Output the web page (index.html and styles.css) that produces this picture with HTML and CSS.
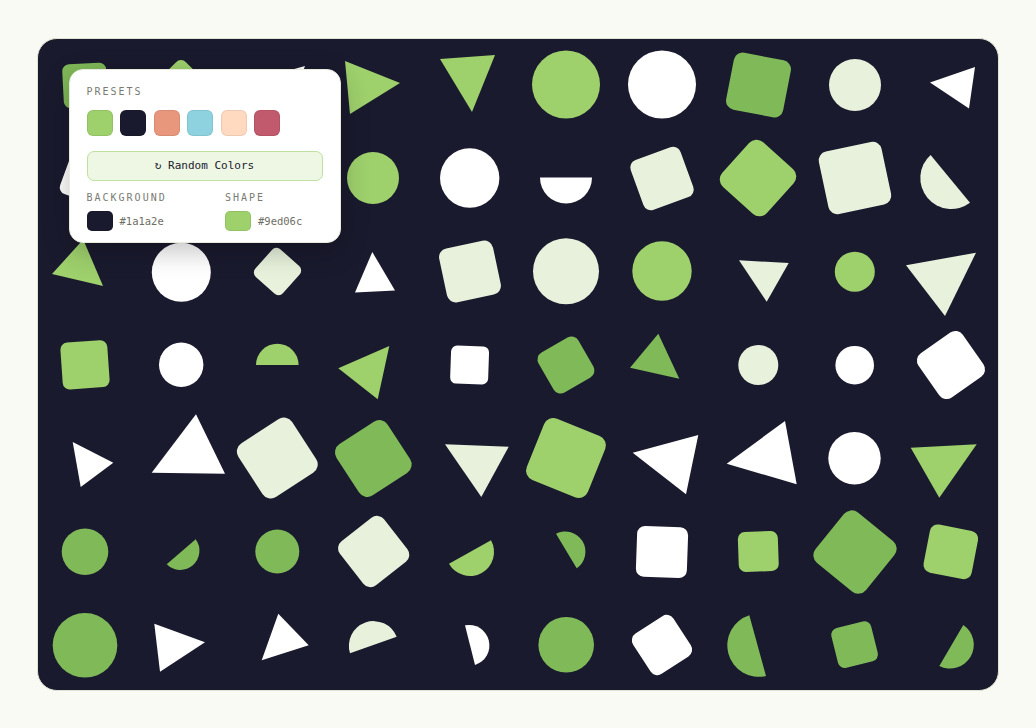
FILE: index.html
```html
<!DOCTYPE html>
<html lang="en">
<head>
<meta charset="utf-8">
<title>Shape Palette</title>
<link rel="stylesheet" href="styles.css">
</head>
<body>
<main class="stage">
  <section class="canvas">
    <div class="grid">
      <!-- row 1 -->
      <div class="cell"><svg viewBox="-48 -46.5 96 93"><rect class="d" x="-22" y="-22" width="44" height="44" rx="7" transform="translate(-1 0) rotate(-3)"/></svg></div>
      <div class="cell"><svg viewBox="-48 -46.5 96 93"><rect class="g" x="-20" y="-20" width="40" height="40" rx="7" transform="translate(-1 0) rotate(45)"/></svg></div>
      <div class="cell"><svg viewBox="-48 -46.5 96 93"><polygon class="w" points="27,-19.5 -25,-5 10,27"/></svg></div>
      <div class="cell"><svg viewBox="-48 -46.5 96 93"><polygon class="g" points="-29,-24.5 26,-2.5 -24,28.5"/></svg></div>
      <div class="cell"><svg viewBox="-48 -46.5 96 93"><polygon class="g" points="-30,-26.5 25,-30.5 2,26.5"/></svg></div>
      <div class="cell"><svg viewBox="-48 -46.5 96 93"><circle class="g" cx="0" cy="-1" r="34"/></svg></div>
      <div class="cell"><svg viewBox="-48 -46.5 96 93"><circle class="w" cx="0" cy="-1" r="34"/></svg></div>
      <div class="cell"><svg viewBox="-48 -46.5 96 93"><rect class="d" x="-29" y="-29" width="58" height="58" rx="9" transform="translate(0.5 -0.5) rotate(11)"/></svg></div>
      <div class="cell"><svg viewBox="-48 -46.5 96 93"><circle class="p" cx="1" cy="-0.5" r="26"/></svg></div>
      <div class="cell"><svg viewBox="-48 -46.5 96 93"><polygon class="w" points="-20,-3 25,-18.5 19,23"/></svg></div>
      <!-- row 2 -->
      <div class="cell"><svg viewBox="-48 -46.5 96 93"><rect class="w" x="-22" y="-22" width="44" height="44" rx="7" transform="rotate(20)"/></svg></div>
      <div class="cell"><svg viewBox="-48 -46.5 96 93"><circle class="g" cx="0" cy="0" r="24"/></svg></div>
      <div class="cell"><svg viewBox="-48 -46.5 96 93"><polygon class="p" points="-22,18 0,-24 22,18"/></svg></div>
      <div class="cell"><svg viewBox="-48 -46.5 96 93"><circle class="g" cx="-1" cy="-0.5" r="26"/></svg></div>
      <div class="cell"><svg viewBox="-48 -46.5 96 93"><circle class="w" cx="-0.3" cy="-0.5" r="29.7"/></svg></div>
      <div class="cell"><svg viewBox="-48 -46.5 96 93"><path class="w" d="M-26,-1 A26,26 0 0 0 26,-1 Z"/></svg></div>
      <div class="cell"><svg viewBox="-48 -46.5 96 93"><rect class="p" x="-26.5" y="-26.5" width="53" height="53" rx="8" transform="rotate(-20)"/></svg></div>
      <div class="cell"><svg viewBox="-48 -46.5 96 93"><rect class="g" x="-30" y="-30" width="60" height="60" rx="10" transform="translate(0 -0.5) rotate(42)"/></svg></div>
      <div class="cell"><svg viewBox="-48 -46.5 96 93"><rect class="p" x="-32" y="-32" width="64" height="64" rx="9" transform="translate(1 -0.5) rotate(-12)"/></svg></div>
      <div class="cell"><svg viewBox="-48 -46.5 96 93"><path class="p" d="M-19.4,-23.6 A31,31 0 0 0 20,24.2 Z"/></svg></div>
      <!-- row 3 -->
      <div class="cell"><svg viewBox="-48 -46.5 96 93"><polygon class="g" points="-34,2.5 -2.8,-32 17,14.5"/></svg></div>
      <div class="cell"><svg viewBox="-48 -46.5 96 93"><circle class="w" cx="-0.7" cy="0.8" r="29.5"/></svg></div>
      <div class="cell"><svg viewBox="-48 -46.5 96 93"><rect class="p" x="-18.5" y="-18.5" width="37" height="37" rx="6" transform="translate(-0.5 0) rotate(42)"/></svg></div>
      <div class="cell"><svg viewBox="-48 -46.5 96 93"><polygon class="w" points="-19,21 -1.7,-19.5 21,19"/></svg></div>
      <div class="cell"><svg viewBox="-48 -46.5 96 93"><rect class="p" x="-27.5" y="-27.5" width="55" height="55" rx="9" transform="rotate(-12)"/></svg></div>
      <div class="cell"><svg viewBox="-48 -46.5 96 93"><circle class="p" cx="0" cy="-0.2" r="33"/></svg></div>
      <div class="cell"><svg viewBox="-48 -46.5 96 93"><circle class="g" cx="0" cy="-0.5" r="29.7"/></svg></div>
      <div class="cell"><svg viewBox="-48 -46.5 96 93"><polygon class="p" points="-19,-11.2 30.7,-8.5 8.7,30.2"/></svg></div>
      <div class="cell"><svg viewBox="-48 -46.5 96 93"><circle class="g" cx="0.8" cy="0.2" r="20"/></svg></div>
      <div class="cell"><svg viewBox="-48 -46.5 96 93"><polygon class="p" points="-44,-6.2 26,-18.8 -5,44.5"/></svg></div>
      <!-- row 4 -->
      <div class="cell"><svg viewBox="-48 -46.5 96 93"><rect class="g" x="-23.5" y="-23.5" width="47" height="47" rx="7" transform="translate(-1 0.3) rotate(-4)"/></svg></div>
      <div class="cell"><svg viewBox="-48 -46.5 96 93"><circle class="w" cx="-0.8" cy="0.3" r="22.2"/></svg></div>
      <div class="cell"><svg viewBox="-48 -46.5 96 93"><path class="g" d="M-22,0.5 A21.3,21.3 0 0 1 20.6,0.5 Z"/></svg></div>
      <div class="cell"><svg viewBox="-48 -46.5 96 93"><polygon class="g" points="-35.7,3.8 15.3,-18.5 3.7,34.8"/></svg></div>
      <div class="cell"><svg viewBox="-48 -46.5 96 93"><rect class="w" x="-19" y="-19" width="38" height="38" rx="6" transform="translate(-0.4 0.5) rotate(2)"/></svg></div>
      <div class="cell"><svg viewBox="-48 -46.5 96 93"><rect class="d" x="-23" y="-23" width="46" height="46" rx="8" transform="translate(0 0.5) rotate(-30)"/></svg></div>
      <div class="cell"><svg viewBox="-48 -46.5 96 93"><polygon class="d" points="-32,3.2 -3.7,-30.8 17.3,14.2"/></svg></div>
      <div class="cell"><svg viewBox="-48 -46.5 96 93"><circle class="p" cx="0.3" cy="0.5" r="20"/></svg></div>
      <div class="cell"><svg viewBox="-48 -46.5 96 93"><circle class="w" cx="0.7" cy="0.7" r="19.3"/></svg></div>
      <div class="cell"><svg viewBox="-48 -46.5 96 93"><rect class="w" x="-27" y="-27" width="54" height="54" rx="9" transform="translate(1 0.5) rotate(-35)"/></svg></div>
      <!-- row 5 -->
      <div class="cell"><svg viewBox="-48 -46.5 96 93"><polygon class="w" points="-13.3,-15.5 27.3,5.2 -5.3,29.5"/></svg></div>
      <div class="cell"><svg viewBox="-48 -46.5 96 93"><polygon class="w" points="-30.3,15.2 14,-43.2 43,16.2"/></svg></div>
      <div class="cell"><svg viewBox="-48 -46.5 96 93"><rect class="p" x="-32" y="-32" width="64" height="64" rx="10" transform="translate(-0.7 0.5) rotate(-33)"/></svg></div>
      <div class="cell"><svg viewBox="-48 -46.5 96 93"><rect class="d" x="-30.5" y="-30.5" width="61" height="61" rx="10" transform="translate(-0.7 1) rotate(-33)"/></svg></div>
      <div class="cell"><svg viewBox="-48 -46.5 96 93"><polygon class="p" points="-25,-13.2 38.7,-10.8 11.3,39.5"/></svg></div>
      <div class="cell"><svg viewBox="-48 -46.5 96 93"><rect class="g" x="-33" y="-33" width="66" height="66" rx="10" transform="translate(0 0.5) rotate(22)"/></svg></div>
      <div class="cell"><svg viewBox="-48 -46.5 96 93"><polygon class="w" points="-29.3,-4.8 36.3,-22.5 24,36.8"/></svg></div>
      <div class="cell"><svg viewBox="-48 -46.5 96 93"><polygon class="w" points="-31.3,6.2 27,-36.5 38.7,26.8"/></svg></div>
      <div class="cell"><svg viewBox="-48 -46.5 96 93"><circle class="w" cx="0.5" cy="0.7" r="26.2"/></svg></div>
      <div class="cell"><svg viewBox="-48 -46.5 96 93"><polygon class="g" points="-39.3,-9.8 26.7,-13.2 -10.7,40.2"/></svg></div>
      <!-- row 6 -->
      <div class="cell"><svg viewBox="-48 -46.5 96 93"><circle class="d" cx="-1" cy="1.2" r="23.3"/></svg></div>
      <div class="cell"><svg viewBox="-48 -46.5 96 93"><path class="d" d="M-15.3,13.8 A19.2,19.2 0 0 0 13.7,-11.2 Z"/></svg></div>
      <div class="cell"><svg viewBox="-48 -46.5 96 93"><circle class="d" cx="-0.7" cy="1" r="22"/></svg></div>
      <div class="cell"><svg viewBox="-48 -46.5 96 93"><rect class="p" x="-28" y="-28" width="56" height="56" rx="9" transform="translate(-0.3 1) rotate(-38)"/></svg></div>
      <div class="cell"><svg viewBox="-48 -46.5 96 93"><path class="g" d="M-21,13.2 A24,24 0 0 0 21,-10.2 Z"/></svg></div>
      <div class="cell"><svg viewBox="-48 -46.5 96 93"><path class="d" d="M-10,-16.8 A20.2,20.2 0 0 1 10.7,17.8 Z"/></svg></div>
      <div class="cell"><svg viewBox="-48 -46.5 96 93"><rect class="w" x="-25.5" y="-25.5" width="51" height="51" rx="8" transform="translate(0 1.5) rotate(2)"/></svg></div>
      <div class="cell"><svg viewBox="-48 -46.5 96 93"><rect class="g" x="-20" y="-20" width="40" height="40" rx="7" transform="translate(0.3 1) rotate(-2)"/></svg></div>
      <div class="cell"><svg viewBox="-48 -46.5 96 93"><rect class="d" x="-32.5" y="-32.5" width="65" height="65" rx="10" transform="translate(1 1.5) rotate(39)"/></svg></div>
      <div class="cell"><svg viewBox="-48 -46.5 96 93"><rect class="g" x="-24.5" y="-24.5" width="49" height="49" rx="8" transform="translate(0.8 1.3) rotate(11)"/></svg></div>
      <!-- row 7 -->
      <div class="cell"><svg viewBox="-48 -46.5 96 93"><circle class="d" cx="-1" cy="1.8" r="32.3"/></svg></div>
      <div class="cell"><svg viewBox="-48 -46.5 96 93"><polygon class="w" points="-27.7,-19.8 23,-1.2 -22,28.2"/></svg></div>
      <div class="cell"><svg viewBox="-48 -46.5 96 93"><polygon class="w" points="-16.3,16.8 0.3,-29.8 30.7,1.8"/></svg></div>
      <div class="cell"><svg viewBox="-48 -46.5 96 93"><path class="p" d="M-24,9.8 A24.8,24.8 0 0 1 22.7,-6.8 Z"/></svg></div>
      <div class="cell"><svg viewBox="-48 -46.5 96 93"><path class="w" d="M-5,-18.2 A20.5,20.5 0 0 1 5,21.5 Z"/></svg></div>
      <div class="cell"><svg viewBox="-48 -46.5 96 93"><circle class="d" cx="0.2" cy="1.3" r="27.8"/></svg></div>
      <div class="cell"><svg viewBox="-48 -46.5 96 93"><rect class="w" x="-24" y="-24" width="48" height="48" rx="8" transform="translate(0 1.5) rotate(-33)"/></svg></div>
      <div class="cell"><svg viewBox="-48 -46.5 96 93"><path class="d" d="M-8.7,-28.2 A31.5,31.5 0 0 0 8,32.5 Z"/></svg></div>
      <div class="cell"><svg viewBox="-48 -46.5 96 93"><rect class="d" x="-20.5" y="-20.5" width="41" height="41" rx="7" transform="translate(0.6 1.2) rotate(-14)"/></svg></div>
      <div class="cell"><svg viewBox="-48 -46.5 96 93"><path class="d" d="M13.3,-18.5 A23.8,23.8 0 0 1 -10.7,22.5 Z"/></svg></div>
    </div>

    <aside class="panel">
      <div class="label">Presets</div>
      <div class="presets">
        <span class="swatch sw-green"></span>
        <span class="swatch sw-navy"></span>
        <span class="swatch sw-salmon"></span>
        <span class="swatch sw-sky"></span>
        <span class="swatch sw-peach"></span>
        <span class="swatch sw-rose"></span>
      </div>
      <button class="random" type="button">↻ Random Colors</button>
      <div class="colors">
        <div class="color-field">
          <div class="label">Background</div>
          <div class="color-row">
            <span class="chip chip-bg"></span>
            <span class="hex">#1a1a2e</span>
          </div>
        </div>
        <div class="color-field">
          <div class="label">Shape</div>
          <div class="color-row">
            <span class="chip chip-shape"></span>
            <span class="hex">#9ed06c</span>
          </div>
        </div>
      </div>
    </aside>
  </section>
</main>
</body>
</html>
```

FILE: styles.css
```css
* {
  box-sizing: border-box;
}

html, body {
  margin: 0;
  padding: 0;
}

body {
  background: #fafaf5;
  font-family: "DejaVu Sans Mono", "Liberation Mono", monospace;
  color: #1a1a2e;
}

.stage {
  min-height: 100vh;
  display: flex;
  align-items: center;
  justify-content: center;
}

.canvas {
  position: relative;
  width: 962px;
  height: 653px;
  background: #1a1a2e;
  border: 1px solid #dfe3d2;
  border-radius: 20px;
  overflow: hidden;
}

.grid {
  display: grid;
  grid-template-columns: repeat(10, 96px);
  grid-template-rows: repeat(7, 93px);
}

.cell svg {
  display: block;
  width: 96px;
  height: 93px;
  overflow: visible;
}

.g { fill: #9ed06c; }
.d { fill: #7fb958; }
.p { fill: #e7f1db; }
.w { fill: #ffffff; }

/* control panel overlay */
.panel {
  position: absolute;
  top: 30px;
  left: 30.5px;
  width: 272px;
  padding: 16px 17px 11px;
  background: #ffffff;
  border: 1px solid #e6ebdb;
  border-radius: 14px;
  box-shadow: 0 8px 28px rgba(0, 0, 0, 0.24);
}

.label {
  font-size: 10px;
  line-height: 12px;
  letter-spacing: 2px;
  text-transform: uppercase;
  color: #7a7a72;
}

.presets {
  display: flex;
  gap: 7.5px;
  margin: 12px 0 15px;
}

.swatch {
  display: block;
  width: 26px;
  height: 26px;
  border-radius: 6px;
  box-shadow: inset 0 0 0 1px rgba(0, 0, 0, 0.07);
}

.sw-green { background: #9ed06c; }
.sw-navy { background: #1a1a2e; }
.sw-salmon { background: #e8967c; }
.sw-sky { background: #8ed2df; }
.sw-peach { background: #ffd9c0; }
.sw-rose { background: #c25a6e; }

.random {
  display: block;
  width: 100%;
  height: 30px;
  margin: 0 0 11px;
  padding: 0;
  background: #eef6e4;
  border: 1px solid #bfe0a0;
  border-radius: 7px;
  font-family: "DejaVu Sans Mono", "Liberation Mono", monospace;
  font-size: 11px;
  color: #1a1a2e;
  cursor: pointer;
}

.colors {
  display: grid;
  grid-template-columns: 138.5px 1fr;
}

.color-row {
  display: flex;
  align-items: center;
  gap: 7px;
  margin-top: 7.6px;
}

.chip {
  display: block;
  width: 26px;
  height: 19.5px;
  border-radius: 5px;
  box-shadow: inset 0 0 0 1px rgba(0, 0, 0, 0.07);
}

.chip-bg { background: #1a1a2e; }
.chip-shape { background: #9ed06c; }

.hex {
  font-size: 10.5px;
  color: #6e6e64;
}
```
